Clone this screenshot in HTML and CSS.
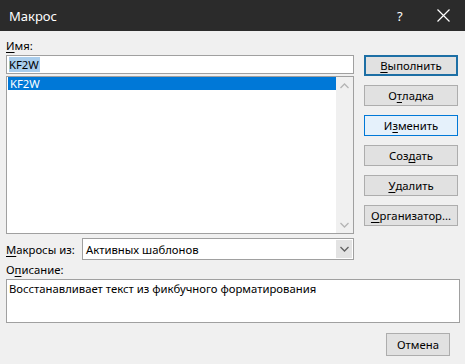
FILE: index.html
```html
<!DOCTYPE html>
<html lang="ru">
<head>
<meta charset="utf-8">
<link rel="stylesheet" href="styles.css">
</head>
<body>
<div class="dialog">
  <div class="titlebar">
    <span class="title">Макрос</span>
    <span class="help">?</span>
    <span class="close">
      <svg width="13" height="13" viewBox="0 0 13 13"><path d="M0.5 0.5 L12.5 12.5 M12.5 0.5 L0.5 12.5" stroke="#ffffff" stroke-width="1.2" fill="none"/></svg>
    </span>
  </div>
  <div class="main">
    <div class="left">
      <div class="label"><u>И</u>мя:</div>
      <div class="namebox"><span class="sel">KF2W</span></div>
      <div class="listbox">
        <div class="items">
          <div class="item selected">KF2W</div>
        </div>
        <div class="vscroll">
          <svg width="9" height="6" viewBox="0 0 9 6"><path d="M0.5 5 L4.5 1 L8.5 5" stroke="#b5b5b5" stroke-width="1.3" fill="none"/></svg>
          <svg width="9" height="6" viewBox="0 0 9 6"><path d="M0.5 1 L4.5 5 L8.5 1" stroke="#b5b5b5" stroke-width="1.3" fill="none"/></svg>
        </div>
      </div>
      <div class="comborow">
        <span class="combolabel"><u>М</u>акросы из:</span>
        <div class="combo">
          <span class="combotext">Активных шаблонов</span>
          <span class="dropbtn">
            <svg width="9" height="6" viewBox="0 0 9 6"><path d="M0.5 1 L4.5 5 L8.5 1" stroke="#606060" stroke-width="1.3" fill="none"/></svg>
          </span>
        </div>
      </div>
    </div>
    <div class="buttons">
      <div class="btn default"><u>В</u>ыполнить</div>
      <div class="btn">О<u>т</u>ладка</div>
      <div class="btn hover">И<u>з</u>менить</div>
      <div class="btn">Соз<u>д</u>ать</div>
      <div class="btn"><u>У</u>далить</div>
      <div class="btn"><u>О</u>рганизатор...</div>
    </div>
  </div>
  <div class="desclabel">О<u>п</u>исание:</div>
  <div class="descbox">Восстанавливает текст из фикбучного форматирования</div>
  <div class="footer">
    <div class="btn cancel">Отмена</div>
  </div>
</div>
</body>
</html>
```

FILE: styles.css
```css
html, body {
  margin: 0;
  padding: 0;
}
body {
  width: 465px;
  height: 364px;
  overflow: hidden;
  background: #f0f0f0;
  font-family: "Noto Sans", "Open Sans", sans-serif;
  font-size: 11.3px;
  color: #000;
}
u {
  text-decoration-thickness: 1px;
  text-underline-offset: 2px;
}
.dialog {
  width: 465px;
  height: 364px;
  display: flex;
  flex-direction: column;
}
.titlebar {
  height: 31px;
  flex: none;
  background: #2b2b2b;
  display: flex;
  align-items: center;
  color: #ffffff;
}
.title {
  font-size: 13px;
  padding-left: 9px;
  flex: 1;
}
.help {
  font-size: 13px;
  width: 12px;
  margin-right: 28px;
}
.close {
  display: flex;
  margin-right: 15px;
}
.main {
  display: grid;
  grid-template-columns: 348px 94px;
  column-gap: 10px;
  padding: 0 6px;
}
.left {
  display: flex;
  flex-direction: column;
}
.label {
  padding-top: 6px;
  line-height: 18px;
  height: 18px;
}
.namebox {
  height: 17px;
  border: 1px solid #a0a0a0;
  background: #fff;
  padding-left: 2px;
  line-height: 17px;
  display: flex;
  align-items: center;
}
.sel {
  background: #a9cdec;
  line-height: 15px;
  padding: 0 1px 0 0;
}
.listbox {
  margin-top: 2px;
  height: 156px;
  border: 1px solid #a0a0a0;
  background: #fff;
  display: flex;
}
.items {
  flex: 1;
  padding-left: 1px;
}
.item {
  height: 13px;
  line-height: 13px;
  padding-left: 2px;
}
.item.selected {
  background: #0078d7;
  color: #fff;
}
.vscroll {
  width: 17px;
  background: #f0f0f0;
  display: flex;
  flex-direction: column;
  justify-content: space-between;
  align-items: center;
  padding: 6px 0 5px;
}
.comborow {
  margin-top: 4px;
  display: flex;
  align-items: center;
  height: 22px;
}
.combolabel {
  width: 76px;
}
.combo {
  flex: 1;
  height: 20px;
  border: 1px solid #a0a0a0;
  background: #fff;
  display: flex;
  align-items: center;
}
.combotext {
  flex: 1;
  padding-left: 3px;
}
.dropbtn {
  width: 16px;
  height: 18px;
  margin-right: 1px;
  background: #e3e3e3;
  display: flex;
  align-items: center;
  justify-content: center;
}
.buttons {
  padding-top: 24px;
  display: flex;
  flex-direction: column;
  gap: 9px;
}
.btn {
  height: 19px;
  border: 1px solid #adadad;
  background: #e1e1e1;
  display: flex;
  align-items: center;
  justify-content: center;
}
.btn.default {
  height: 17px;
  border: 2px solid #1d6fa5;
}
.btn.hover {
  background: #e5f1fb;
  border-color: #0078d7;
}
.desclabel {
  padding: 2px 6px 0;
  height: 16px;
  line-height: 16px;
}
.descbox {
  margin: 1px 5px 0 6px;
  height: 42px;
  border: 1px solid #a0a0a0;
  background: #fff;
  padding-left: 2px;
  line-height: 18px;
}
.footer {
  display: flex;
  justify-content: flex-end;
  padding: 10px 15px 0 0;
}
.btn.cancel {
  width: 62px;
  height: 21px;
}
```
